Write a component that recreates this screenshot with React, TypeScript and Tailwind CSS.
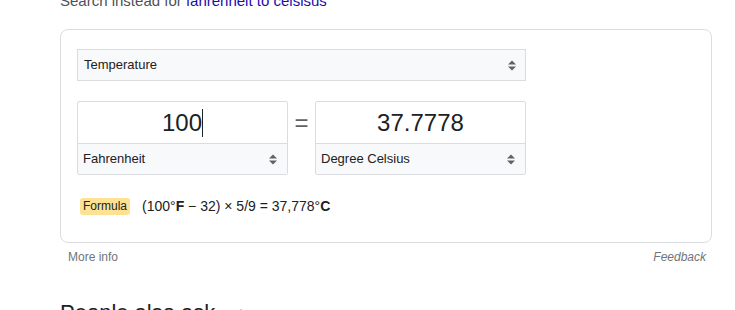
import React from "react"

function SelectArrows() {
  return (
    <svg width="8" height="11" viewBox="0 0 8 11" className="shrink-0">
      <polygon points="0,4.5 4,0.5 8,4.5" fill="#5f6368" />
      <polygon points="0,6.5 8,6.5 4,10.5" fill="#5f6368" />
    </svg>
  )
}

function UnitBox({ value, unit, caret }: { value: string; unit: string; caret?: boolean }) {
  return (
    <div className="w-[211px] border border-[#dadce0] rounded-[2px] overflow-hidden">
      <div className="h-[42px] flex items-center justify-center text-[24px] text-[#202124] border-b border-[#dadce0]">
        <span>{value}</span>
        {caret && <span className="inline-block w-px h-[28px] bg-[#202124]" />}
      </div>
      <div className="h-[30px] bg-[#f8f9fa] flex items-center justify-between pl-[5px] pr-[10px] text-[13px] text-[#202124]">
        <span>{unit}</span>
        <SelectArrows />
      </div>
    </div>
  )
}

export default function App() {
  return (
    <div className="w-[735px] h-[310px] overflow-hidden bg-white font-['Liberation_Sans',Arial,sans-serif]">
      <div className="pl-[60px] -mt-[9px] h-[20px] text-[15px] leading-5 text-[#4d5156] whitespace-nowrap">
        Search instead for <span className="text-[#1a0dab]">fahrenheit to celsisus</span>
      </div>

      <div className="ml-[60px] mt-[18px] w-[652px] h-[214px] border border-[#dadce0] rounded-[8px] px-4 pt-[19px]">
        <div className="w-[449px] h-[32px] border border-[#dadce0] bg-[#f8f9fa] flex items-center justify-between pl-[6px] pr-[9px] text-[13px] text-[#202124]">
          <span>Temperature</span>
          <SelectArrows />
        </div>

        <div className="mt-5 flex items-start">
          <UnitBox value="100" unit="Fahrenheit" caret />
          <div className="w-[27px] h-[43px] flex items-center justify-center text-[24px] text-[#5f6368]">=</div>
          <UnitBox value="37.7778" unit="Degree Celsius" />
        </div>

        <div className="mt-[22px] ml-[3px] h-[18px] flex items-center gap-3 text-[14px] text-[#202124]">
          <span className="bg-[#fde293] rounded-[3px] px-[3px] h-[17px] leading-[17px] text-[12px]">Formula</span>
          <span>
            (100°<b>F</b> − 32) × 5/9 = 37,778°<b>C</b>
          </span>
        </div>
      </div>

      <div className="ml-[60px] w-[652px] mt-[6px] h-[16px] flex items-center justify-between pl-2 pr-[6px] text-[12px] text-[#70757a]">
        <span>More info</span>
        <span className="italic">Feedback</span>
      </div>

      <div className="ml-[60px] mt-[35px] flex items-start text-[22px] leading-[26px] text-[#202124]">
        <span>People also ask</span>
        <svg width="4" height="16" viewBox="0 0 4 16" className="ml-[24px] mt-[9px]">
          <circle cx="2" cy="2" r="1.6" fill="#70757a" />
          <circle cx="2" cy="8" r="1.6" fill="#70757a" />
          <circle cx="2" cy="14" r="1.6" fill="#70757a" />
        </svg>
      </div>
    </div>
  )
}
